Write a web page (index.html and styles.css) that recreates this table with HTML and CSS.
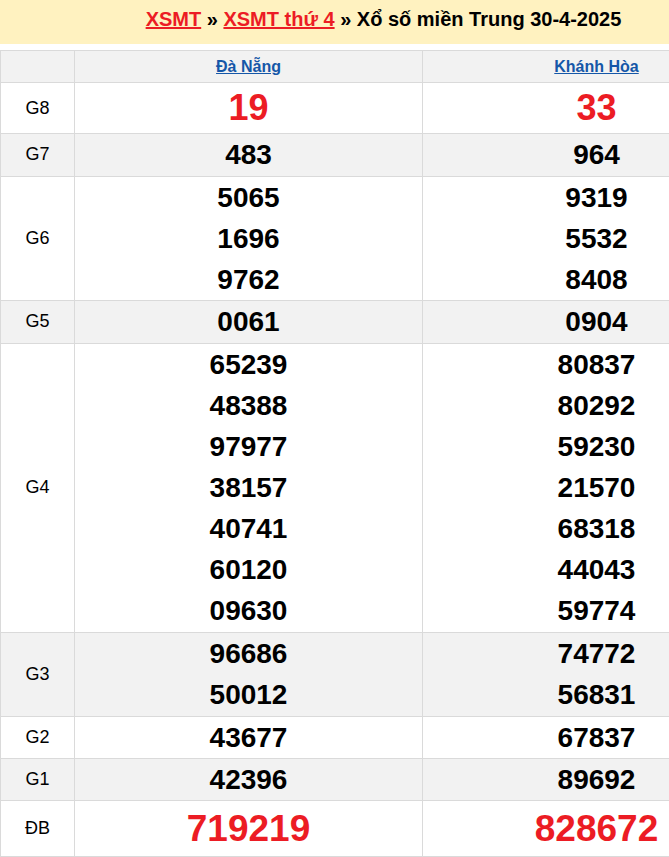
FILE: index.html
```html
<!DOCTYPE html>
<html lang="vi">
<head>
<meta charset="utf-8">
<title>XSMT 30-4-2025</title>
<link rel="stylesheet" href="styles.css">
</head>
<body>
<div class="page">
  <div class="title-bar">
    <h1 class="title"><a href="#" class="crumb">XSMT</a> » <a href="#" class="crumb">XSMT thứ 4</a> » Xổ số miền Trung 30-4-2025</h1>
  </div>
  <table class="results">
    <colgroup><col class="c-label"><col class="c-prov"><col class="c-prov"></colgroup>
    <tr class="head gray">
      <th></th>
      <th><a href="#" class="prov">Đà Nẵng</a></th>
      <th><a href="#" class="prov">Khánh Hòa</a></th>
    </tr>
    <tr class="g8">
      <td class="label">G8</td>
      <td><div class="num red big">19</div></td>
      <td><div class="num red big">33</div></td>
    </tr>
    <tr class="gray pad">
      <td class="label">G7</td>
      <td><div class="num">483</div></td>
      <td><div class="num">964</div></td>
    </tr>
    <tr>
      <td class="label">G6</td>
      <td><div class="num">5065</div><div class="num">1696</div><div class="num">9762</div></td>
      <td><div class="num">9319</div><div class="num">5532</div><div class="num">8408</div></td>
    </tr>
    <tr class="gray pad">
      <td class="label">G5</td>
      <td><div class="num">0061</div></td>
      <td><div class="num">0904</div></td>
    </tr>
    <tr class="pad">
      <td class="label">G4</td>
      <td><div class="num">65239</div><div class="num">48388</div><div class="num">97977</div><div class="num">38157</div><div class="num">40741</div><div class="num">60120</div><div class="num">09630</div></td>
      <td><div class="num">80837</div><div class="num">80292</div><div class="num">59230</div><div class="num">21570</div><div class="num">68318</div><div class="num">44043</div><div class="num">59774</div></td>
    </tr>
    <tr class="gray pad">
      <td class="label">G3</td>
      <td><div class="num">96686</div><div class="num">50012</div></td>
      <td><div class="num">74772</div><div class="num">56831</div></td>
    </tr>
    <tr>
      <td class="label">G2</td>
      <td><div class="num">43677</div></td>
      <td><div class="num">67837</div></td>
    </tr>
    <tr class="gray">
      <td class="label">G1</td>
      <td><div class="num">42396</div></td>
      <td><div class="num">89692</div></td>
    </tr>
    <tr class="db">
      <td class="label">ĐB</td>
      <td><div class="num red big db-num">719219</div></td>
      <td><div class="num red big db-num">828672</div></td>
    </tr>
  </table>
</div>
</body>
</html>
```
FILE: styles.css
```css
html, body {
  margin: 0;
  padding: 0;
  overflow: hidden;
  background: #ffffff;
}
body {
  font-family: "Liberation Sans", Arial, sans-serif;
  color: #000;
}
.page {
  width: 771px;
}
.title-bar {
  background: #fff2c0;
  height: 44px;
  display: flex;
  align-items: center;
  justify-content: center;
  margin-bottom: 6px;
}
.title {
  margin: 0;
  font-size: 20px;
  font-weight: bold;
  line-height: 24px;
  padding-bottom: 6px;
  padding-right: 4px;
  color: #000;
}
.crumb {
  color: #ec1c24;
  text-decoration: underline;
}
.results {
  width: 771px;
  border-collapse: collapse;
  table-layout: fixed;
}
.c-label { width: 74px; }
.c-prov { width: 348px; }
.results th, .results td {
  border: 1px solid #dadada;
  padding: 0;
  text-align: center;
  vertical-align: middle;
}
.pad td {
  padding-bottom: 1px;
}
.head th {
  height: 31px;
}
.prov {
  color: #1557a8;
  font-size: 16px;
  font-weight: bold;
  text-decoration: underline;
}
.gray td, .gray th {
  background: #f2f2f2;
}
.label {
  font-size: 18px;
}
.num {
  font-size: 28px;
  font-weight: bold;
  line-height: 41px;
}
.red {
  color: #ec1c24;
}
.big {
  font-size: 36px;
  line-height: 50px;
}
.db-num {
  font-size: 37px;
  line-height: 55px;
}
```
